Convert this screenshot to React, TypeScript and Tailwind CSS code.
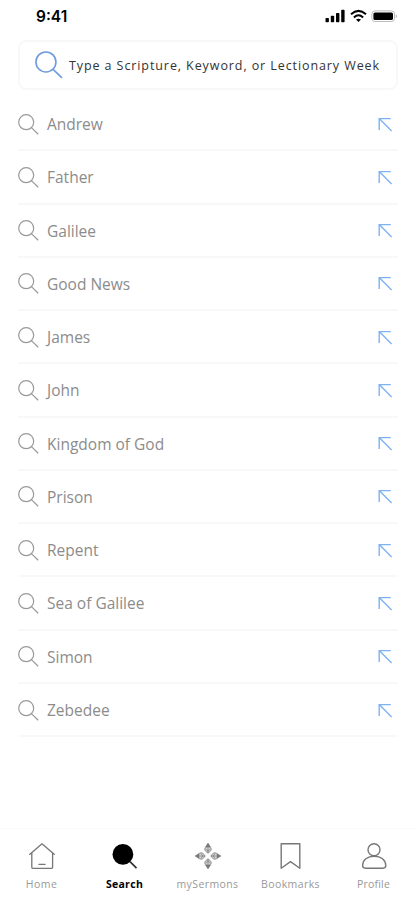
import { useState } from "react";

const terms = [
  "Andrew",
  "Father",
  "Galilee",
  "Good News",
  "James",
  "John",
  "Kingdom of God",
  "Prison",
  "Repent",
  "Sea of Galilee",
  "Simon",
  "Zebedee",
];

const SearchIcon = ({ className }: { className: string }) => (
  <svg className={className} viewBox="0 0 21 21" fill="none" stroke="currentColor" strokeWidth="1.2">
    <circle cx="8.2" cy="8.2" r="7.5" />
    <path d="M13.4 13.6L20.2 20.2" />
  </svg>
);

const ArrowIcon = () => (
  <svg className="size-[15px] text-[#7fb2f5]" viewBox="0 0 15 15" fill="none" stroke="currentColor" strokeWidth="1.4">
    <path d="M12.8 1.6H1.2V13M1.2 1.6L13.6 14" />
  </svg>
);

const HomeIcon = () => (
  <svg className="size-7 text-[#777]" viewBox="0 0 28 28" fill="none" stroke="currentColor" strokeWidth="1.3" strokeLinejoin="round" strokeLinecap="round">
    <path d="M1.6 12.4L14 1.8L26.4 12.4" />
    <path d="M3.8 10.8V25.2Q3.8 26.4 5 26.4H23.4Q24.6 26.4 24.6 25.2V10.8" />
    <path d="M11 22.4H17" />
  </svg>
);

const SearchFilledIcon = () => (
  <svg className="size-7 text-black" viewBox="0 0 28 28" fill="none">
    <circle cx="11.9" cy="12.4" r="10.4" fill="currentColor" />
    <path d="M19 19.7L25.5 26.2" stroke="#333" strokeWidth="1.7" />
  </svg>
);

// four leaves pointing outwards, one drawn and rotated
const SermonsIcon = () => (
  <svg className="size-7 text-[#777]" viewBox="0 0 28 28" fill="none" stroke="currentColor" strokeWidth="0.8">
    {[0, 90, 180, 270].map((angle) => (
      <g key={angle} transform={`rotate(${angle} 14 14)`}>
        <path d="M14 1.2Q15.4 3.4 16.6 5.2L14 6.6L11.4 5.2Q12.6 3.4 14 1.2Z" fill="currentColor" />
        <path d="M11.4 5.4Q9.4 8.2 14 11.2Q18.6 8.2 16.6 5.4" fill="#ddd" />
        <path d="M14 5.5V11M11.4 6.8L14 9L16.6 6.8" />
      </g>
    ))}
  </svg>
);

const BookmarkIcon = () => (
  <svg className="size-7 text-[#777]" viewBox="0 0 28 28" fill="none" stroke="currentColor" strokeWidth="1.4" strokeLinejoin="round">
    <path d="M4.2 1.8H22.8V26.2L13.5 19.6L4.2 26.2Z" />
  </svg>
);

const ProfileIcon = () => (
  <svg className="size-7 text-[#777]" viewBox="0 0 28 28" fill="none" stroke="currentColor" strokeWidth="1.4" strokeLinejoin="round">
    <circle cx="14" cy="7.7" r="6" />
    <path d="M2.6 23.6C2.6 18 7.4 14.2 14.2 14.2S25.8 18 25.8 23.6Q25.8 26.2 23 26.2H5.4Q2.6 26.2 2.6 23.6Z" />
  </svg>
);

const tabs = [
  { name: "Home", icon: HomeIcon, spacing: "tracking-[0.5px]" },
  { name: "Search", icon: SearchFilledIcon, spacing: "tracking-[0.3px]" },
  { name: "mySermons", icon: SermonsIcon, spacing: "tracking-[0.4px]" },
  { name: "Bookmarks", icon: BookmarkIcon, spacing: "tracking-[0.4px]" },
  { name: "Profile", icon: ProfileIcon, spacing: "tracking-[0.2px]" },
];

export default function App() {
  const [active, setActive] = useState("Search");

  return (
    <div className="flex h-[900px] w-[415px] flex-col overflow-hidden bg-white font-['Open_Sans',sans-serif]">
      <div className="flex h-10 shrink-0 items-start justify-between pr-[17px] pl-[36px]">
        <div className="pt-[7px] font-['Inter',sans-serif] text-[15.5px] leading-5 font-semibold text-black">9:41</div>
        <div className="flex items-center pt-[9px] text-black">
          <svg className="h-[14px] w-[20px]" viewBox="0 0 20 14" fill="currentColor">
            <rect x="0.5" y="9" width="3.4" height="4.2" rx="0.8" />
            <rect x="5.8" y="6.8" width="3.4" height="6.4" rx="0.8" />
            <rect x="11" y="4" width="3.4" height="9.2" rx="0.8" />
            <rect x="16.2" y="0.8" width="3.4" height="12.4" rx="0.8" />
          </svg>
          <svg className="ml-[5px] h-[14px] w-[17px]" viewBox="0 0 17 14" fill="none" stroke="currentColor" strokeWidth="2">
            <path d="M1 5.2Q8.5 -1.4 16 5.2" />
            <path d="M3.9 8.4Q8.5 4.2 13.1 8.4" />
            <path d="M8.5 13L6 10.6Q8.5 8.8 11 10.6Z" fill="currentColor" stroke="none" />
          </svg>
          <svg className="ml-[4px] h-[14px] w-[27px]" viewBox="0 0 27 14">
            <rect x="0.9" y="1.9" width="22.6" height="10.6" rx="3" fill="none" stroke="#bbb" />
            <rect x="2.4" y="3.4" width="19.6" height="7.6" rx="1.6" fill="currentColor" />
            <path d="M24.8 5.2Q27 7.2 24.8 9.2Z" fill="#aaa" />
          </svg>
        </div>
      </div>

      <div className="mr-[17px] ml-[18px] flex h-[50px] shrink-0 items-center rounded-lg border-2 border-[#f8f8f8] pl-[15px]">
        <SearchIcon className="size-[28px] shrink-0 text-[#6f9bdc]" />
        <div className="ml-[6px] pt-0.5 text-[12.5px] tracking-[0.91px] whitespace-nowrap text-[#333]">Type a Scripture, Keyword, or Lectionary Week</div>
      </div>

      <div className="mr-[17px] ml-[18px] mt-[8px]">
        {terms.map((term) => (
          <div key={term} className="flex h-[53.27px] items-center border-b-2 border-[#f8f8f8] pt-px pr-[5px]">
            <SearchIcon className="size-[21px] text-[#999]" />
            <div className="ml-2 flex-1 pt-px text-[15.5px] text-[#8c8c8c]">{term}</div>
            <ArrowIcon />
          </div>
        ))}
      </div>

      <div className="mt-auto grid h-[72px] shrink-0 grid-cols-5 border-t border-[#fafafa] pt-[13px]">
        {tabs.map(({ name, icon: Icon, spacing }) => (
          <div key={name} className="flex flex-col items-center" onClick={() => setActive(name)}>
            <Icon />
            <div className={`mt-[6px] text-[10.5px] leading-4 ${spacing} ${name === active ? "font-bold text-black" : "text-[#999]"}`}>{name}</div>
          </div>
        ))}
      </div>
    </div>
  );
}
